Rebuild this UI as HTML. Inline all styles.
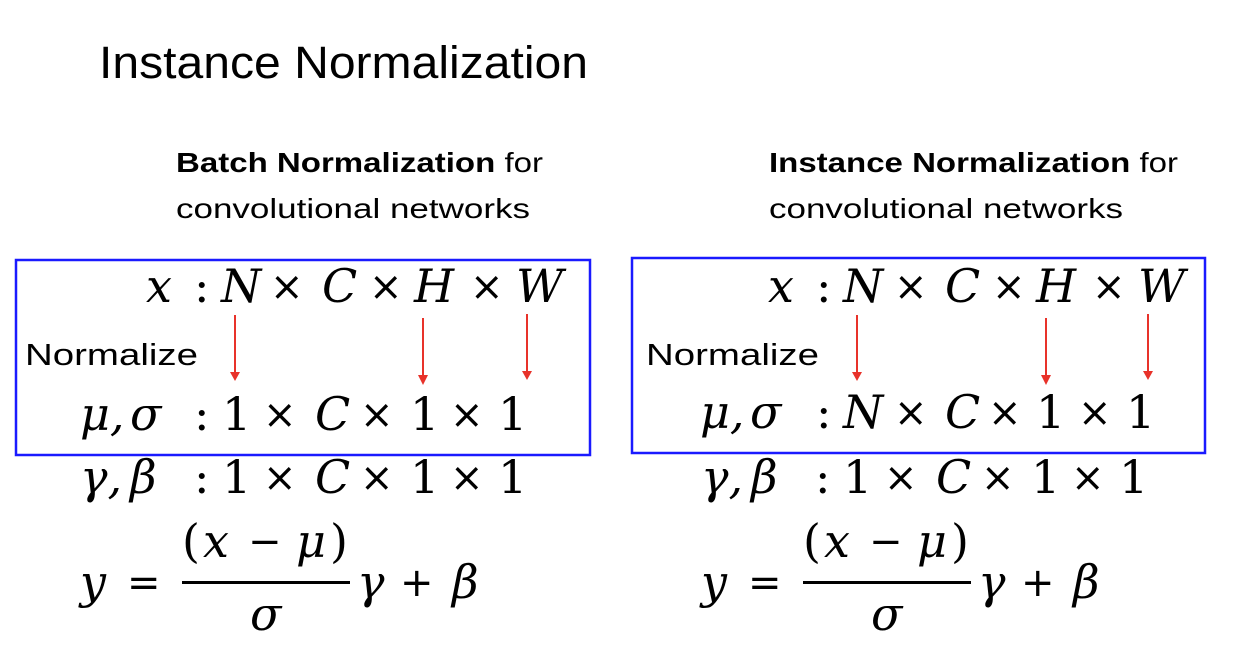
<!DOCTYPE html>
<html><head><meta charset="utf-8"><style>
html,body{margin:0;padding:0;background:#fff;}
svg{display:block}
.m{font-family:"DejaVu Serif",serif;font-style:italic;font-size:46px;fill:#000}
.n{font-family:"DejaVu Serif",serif;font-size:46px;fill:#000}
.t{font-family:"DejaVu Sans",sans-serif;font-size:40px;fill:#000}
.s{font-family:"Liberation Sans",sans-serif;fill:#000}
</style></head><body>
<svg width="1260" height="652" viewBox="0 0 1260 652" xmlns="http://www.w3.org/2000/svg">
<text x="99" y="78" class="s" font-size="45" textLength="489" lengthAdjust="spacingAndGlyphs">Instance Normalization</text>

<text x="176" y="172" class="s" font-size="28" textLength="367" lengthAdjust="spacingAndGlyphs"><tspan font-weight="bold">Batch Normalization</tspan> for</text>
<text x="176" y="218" class="s" font-size="28" textLength="354" lengthAdjust="spacingAndGlyphs">convolutional networks</text>
<rect x="16" y="260" width="574" height="195" fill="none" stroke="#1a1aff" stroke-width="2.5"/>
<text x="25" y="365" class="s" font-size="31" textLength="173" lengthAdjust="spacingAndGlyphs">Normalize</text>

<text x="769" y="172" class="s" font-size="28" textLength="409" lengthAdjust="spacingAndGlyphs"><tspan font-weight="bold">Instance Normalization</tspan> for</text>
<text x="769" y="218" class="s" font-size="28" textLength="354" lengthAdjust="spacingAndGlyphs">convolutional networks</text>
<rect x="632" y="258" width="573" height="195" fill="none" stroke="#1a1aff" stroke-width="2.5"/>
<text x="646" y="365" class="s" font-size="31" textLength="173" lengthAdjust="spacingAndGlyphs">Normalize</text>

<text y="302" class="m"><tspan x="146">x</tspan><tspan x="221">N</tspan><tspan x="322">C</tspan><tspan x="414">H</tspan><tspan x="516">W</tspan></text>
<text y="302" class="n"><tspan x="194">:</tspan></text>
<text y="300" class="t"><tspan x="270">×</tspan><tspan x="369">×</tspan><tspan x="470">×</tspan></text>
<text y="430" class="m"><tspan x="80">μ,</tspan><tspan x="130">σ</tspan><tspan x="315">C</tspan></text>
<text y="430" class="n"><tspan x="194">:</tspan><tspan x="222">1</tspan><tspan x="410">1</tspan><tspan x="498">1</tspan></text>
<text y="428" class="t"><tspan x="263">×</tspan><tspan x="360">×</tspan><tspan x="450">×</tspan></text>
<text y="493" class="m"><tspan x="80">γ,</tspan><tspan x="130">β</tspan><tspan x="315">C</tspan></text>
<text y="493" class="n"><tspan x="194">:</tspan><tspan x="222">1</tspan><tspan x="410">1</tspan><tspan x="498">1</tspan></text>
<text y="491" class="t"><tspan x="263">×</tspan><tspan x="360">×</tspan><tspan x="450">×</tspan></text>
<text y="598" class="m"><tspan x="80">y</tspan><tspan x="357">γ</tspan><tspan x="452">β</tspan></text>
<text y="596" class="t"><tspan x="127">=</tspan><tspan x="400">+</tspan></text>
<text y="557" class="n"><tspan x="182">(</tspan><tspan x="330">)</tspan></text>
<text y="557" class="m"><tspan x="203">x</tspan><tspan x="296">μ</tspan></text>
<text y="555" class="t"><tspan x="248">−</tspan></text>
<rect x="182" y="581" width="168" height="3" fill="#000"/>
<text y="630" class="m"><tspan x="250">σ</tspan></text>

<g stroke="#e8322a" stroke-width="2" fill="#e8322a">
<line x1="235" y1="315" x2="235" y2="374"/><path d="M230 372 L240 372 L235 381 Z" stroke="none"/>
<line x1="423" y1="318" x2="423" y2="377"/><path d="M418 375 L428 375 L423 385 Z" stroke="none"/>
<line x1="527" y1="314" x2="527" y2="373"/><path d="M522 371 L532 371 L527 380 Z" stroke="none"/>
<line x1="857" y1="315" x2="857" y2="374"/><path d="M852 372 L862 372 L857 381 Z" stroke="none"/>
<line x1="1046" y1="318" x2="1046" y2="377"/><path d="M1041 375 L1051 375 L1046 385 Z" stroke="none"/>
<line x1="1148" y1="314" x2="1148" y2="373"/><path d="M1143 371 L1153 371 L1148 380 Z" stroke="none"/>
</g>

<text y="302" class="m"><tspan x="768">x</tspan><tspan x="843">N</tspan><tspan x="945">C</tspan><tspan x="1036">H</tspan><tspan x="1138">W</tspan></text>
<text y="302" class="n"><tspan x="816">:</tspan></text>
<text y="300" class="t"><tspan x="894">×</tspan><tspan x="992">×</tspan><tspan x="1092">×</tspan></text>
<text y="428" class="m"><tspan x="700">μ,</tspan><tspan x="750">σ</tspan><tspan x="843">N</tspan><tspan x="945">C</tspan></text>
<text y="428" class="n"><tspan x="816">:</tspan><tspan x="1036">1</tspan><tspan x="1126">1</tspan></text>
<text y="426" class="t"><tspan x="894">×</tspan><tspan x="988">×</tspan><tspan x="1078">×</tspan></text>
<text y="493" class="m"><tspan x="701">γ,</tspan><tspan x="751">β</tspan><tspan x="936">C</tspan></text>
<text y="493" class="n"><tspan x="815">:</tspan><tspan x="843">1</tspan><tspan x="1031">1</tspan><tspan x="1119">1</tspan></text>
<text y="491" class="t"><tspan x="884">×</tspan><tspan x="981">×</tspan><tspan x="1071">×</tspan></text>
<text y="598" class="m"><tspan x="701">y</tspan><tspan x="978">γ</tspan><tspan x="1073">β</tspan></text>
<text y="596" class="t"><tspan x="748">=</tspan><tspan x="1021">+</tspan></text>
<text y="557" class="n"><tspan x="803">(</tspan><tspan x="951">)</tspan></text>
<text y="557" class="m"><tspan x="824">x</tspan><tspan x="917">μ</tspan></text>
<text y="555" class="t"><tspan x="869">−</tspan></text>
<rect x="803" y="581" width="168" height="3" fill="#000"/>
<text y="630" class="m"><tspan x="871">σ</tspan></text>
</svg>
</body></html>
